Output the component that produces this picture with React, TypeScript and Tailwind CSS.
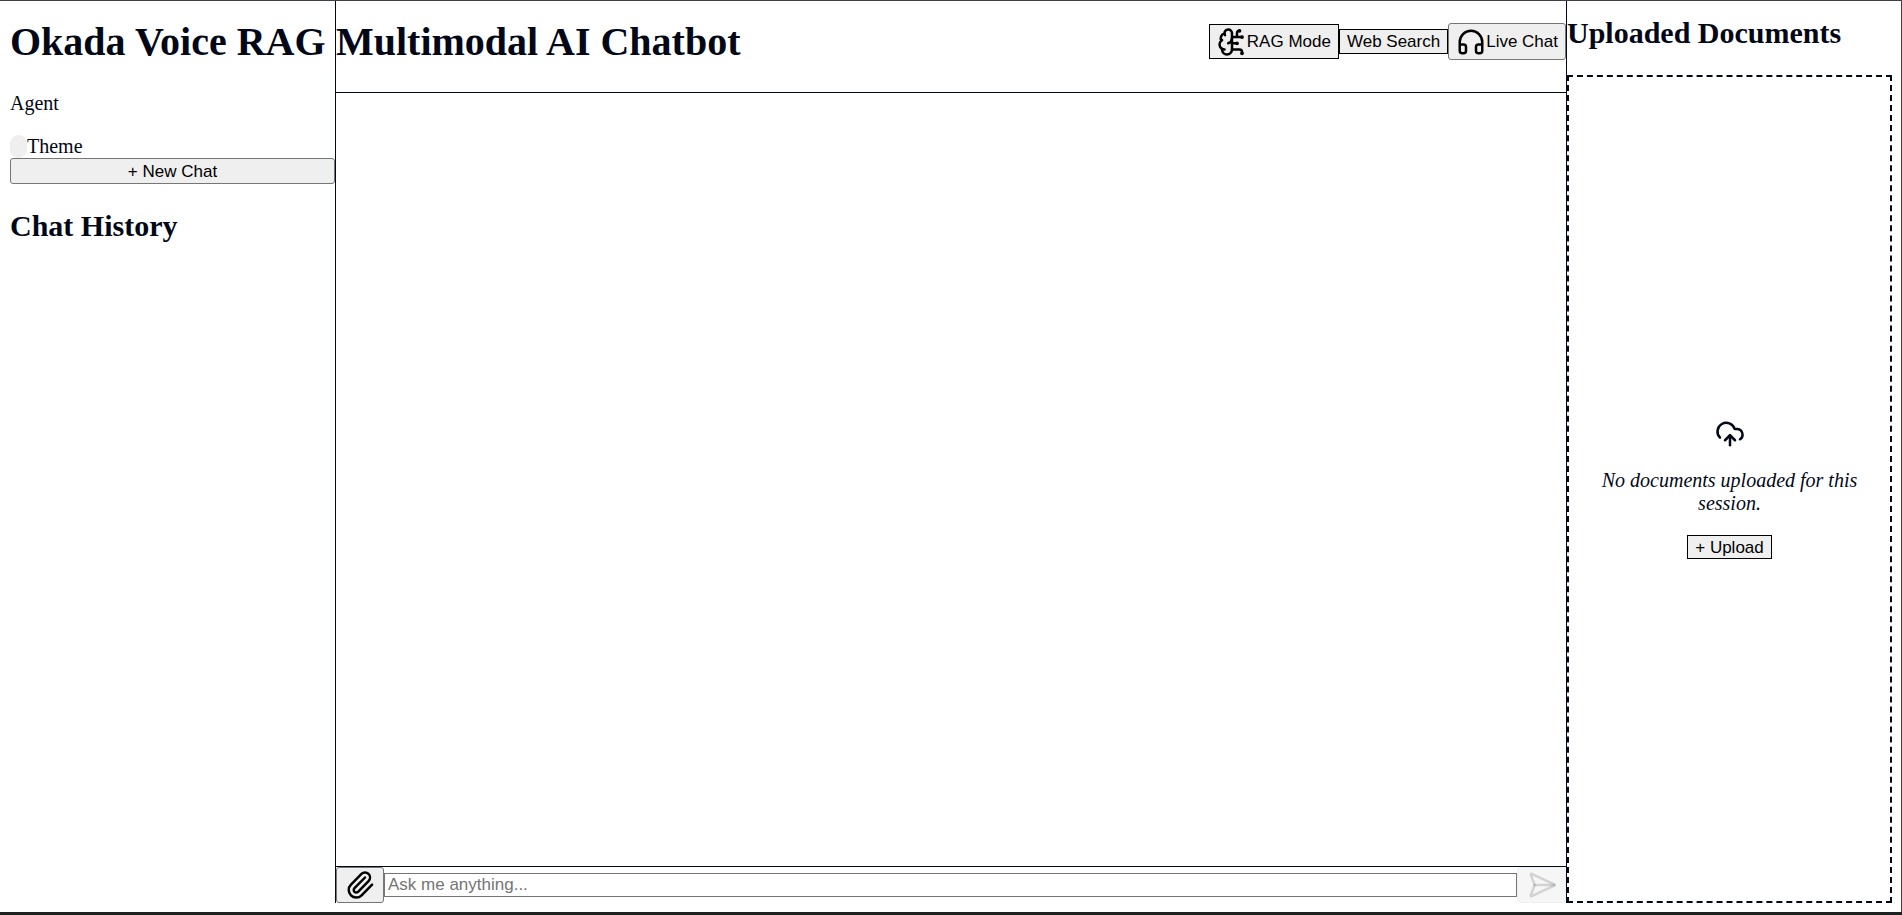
import { useState } from "react";
import { BrainCircuit, CloudUpload, Headphones, Paperclip, SendHorizontal } from "lucide-react";

const sans = "font-['Liberation_Sans',Arial,sans-serif] text-[17px] leading-[19px] text-black";
const softButton = "rounded-[3px] border border-[#767676] bg-[#efefef] px-[7px]";
const squareButton = "border border-black bg-[#efefef] px-[7px]";

function Sidebar() {
  return (
    <aside className="flex w-[325px] shrink-0 flex-col">
      <h1 className="mt-[18px] mb-[27px] text-[40px] leading-[46px] font-bold whitespace-nowrap">Okada Voice RAG</h1>
      <p className="mb-5 leading-[23px]">Agent</p>
      <div className="flex items-center">
        <button type="button" aria-label="Toggle theme" className="h-[23px] w-[17px] rounded-full bg-[#efefef]" />
        <span className="leading-[23px]">Theme</span>
      </div>
      <button type="button" className={`${sans} ${softButton} h-[26px] w-full`}>
        + New Chat
      </button>
      <h2 className="mt-6 text-[30px] leading-[35px] font-bold">Chat History</h2>
    </aside>
  );
}

function ChatPanel() {
  const [message, setMessage] = useState("");
  return (
    <main className="flex min-w-0 flex-1 flex-col border-x border-[#020817]">
      <header className="flex items-start justify-between border-b border-[#020817] pb-[27px]">
        <h1 className="mt-[18px] text-[40px] leading-[46px] font-bold">Multimodal AI Chatbot</h1>
        <div className="mt-[22px] flex items-center">
          <button type="button" className={`${sans} ${squareButton} flex h-[35px] items-center`}>
            <BrainCircuit size={30} aria-hidden="true" />
            RAG Mode
          </button>
          <button type="button" className={`${sans} ${squareButton} h-[25px]`}>
            Web Search
          </button>
          <button type="button" className={`${sans} ${softButton} flex h-[37px] items-center`}>
            <Headphones size={30} aria-hidden="true" />
            Live Chat
          </button>
        </div>
      </header>
      <section aria-label="Messages" className="flex-1" />
      <form className="flex items-center border-t border-[#020817]" onSubmit={(e) => e.preventDefault()}>
        <button type="button" aria-label="Attach file" className={`${softButton} flex h-9 w-12 items-center justify-center`}>
          <Paperclip size={30} className="shrink-0 text-black" aria-hidden="true" />
        </button>
        <input
          type="text"
          aria-label="Message"
          placeholder="Ask me anything..."
          value={message}
          onChange={(e) => setMessage(e.target.value)}
          className={`${sans} h-6 min-w-0 flex-1 border border-[#767676] bg-white px-[3px] placeholder:text-[#757575]`}
        />
        <button
          type="submit"
          aria-label="Send"
          disabled={message === ""}
          className="flex h-9 w-[49px] items-center justify-center rounded-[3px] border border-[#efefef] bg-[#f6f6f6] text-[rgba(16,16,16,0.15)]"
        >
          <SendHorizontal size={30} aria-hidden="true" />
        </button>
      </form>
    </main>
  );
}

function DocumentsPanel() {
  return (
    <aside className="flex w-[325px] shrink-0 flex-col">
      <h2 className="mt-[14px] mb-[25px] text-[30px] leading-[35px] font-bold">Uploaded Documents</h2>
      <div className="flex flex-1 flex-col items-center justify-center border-2 border-dashed border-[#020817] px-5">
        <CloudUpload size={30} aria-hidden="true" />
        <p className="my-5 text-center leading-[23px] italic">No documents uploaded for this session.</p>
        <button type="button" className={`${sans} ${squareButton} h-6`}>
          + Upload
        </button>
      </div>
    </aside>
  );
}

export default function App() {
  return (
    <div className="flex h-screen flex-col border-b-3 border-[#1e2121] bg-white">
      <div className="flex min-h-0 flex-1 border-t border-r border-[#403e4b] pr-[9px] pb-[9px] pl-[10px] font-['Liberation_Serif','Times_New_Roman',serif] text-[20px] text-[#020817]">
        <Sidebar />
        <ChatPanel />
        <DocumentsPanel />
      </div>
    </div>
  );
}
